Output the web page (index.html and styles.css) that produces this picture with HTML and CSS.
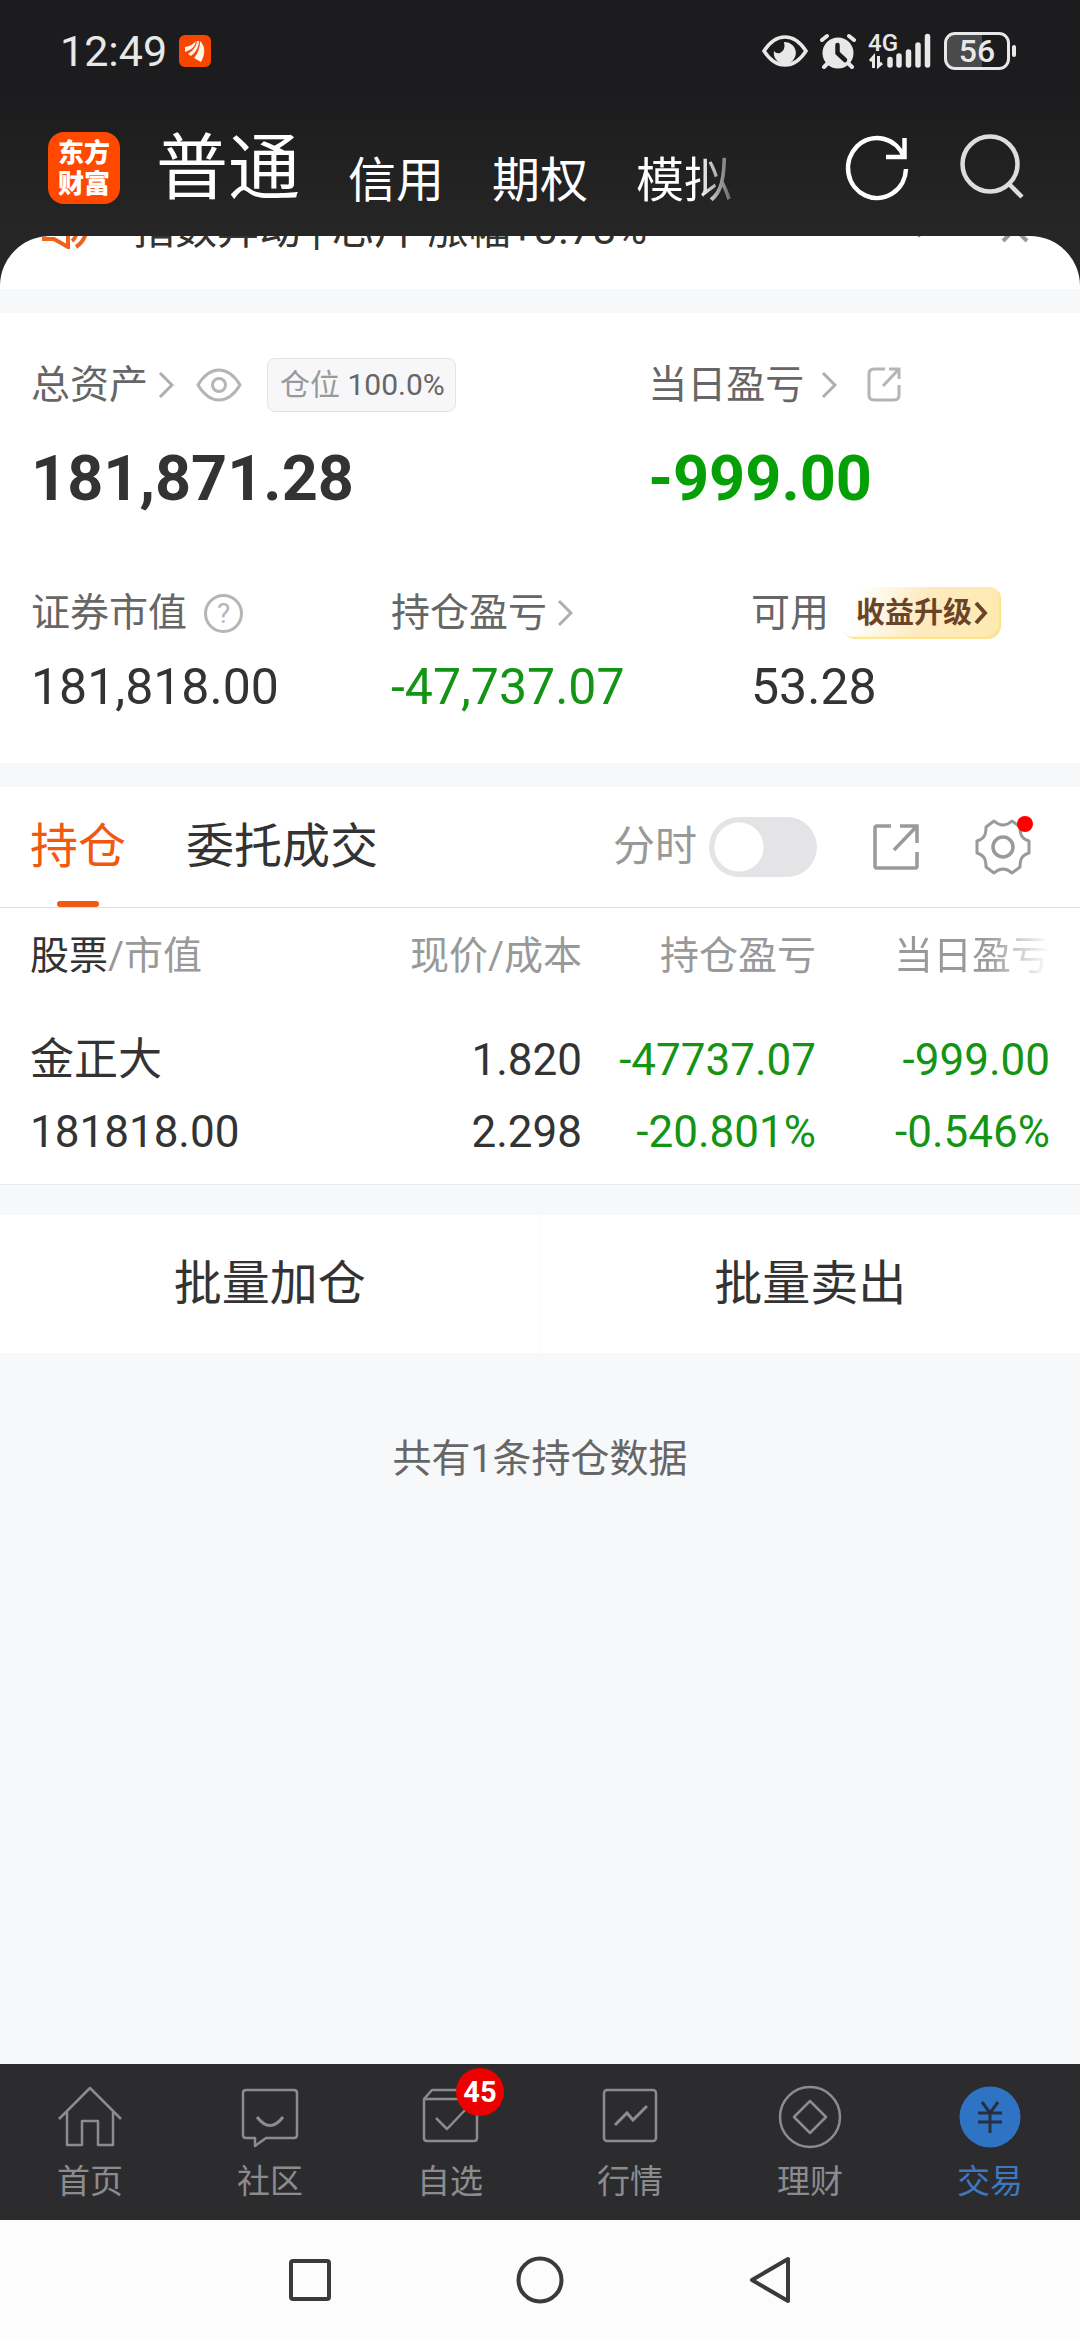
FILE: index.html
```html
<!DOCTYPE html>
<html lang="zh-CN">
<head>
<meta charset="utf-8">
<meta name="viewport" content="width=device-width, initial-scale=1">
<title>交易</title>
<link rel="stylesheet" href="styles.css">
</head>
<body>
<header class="top">
  <div class="status">
    <span class="clock">12:49</span>
    <svg class="status-app" width="32" height="32" viewBox="0 0 32 32"><rect width="32" height="32" rx="6" fill="#f64600"/><path d="M6 12Q13 11 17 6Q16 14 6 17ZM9 19Q17 14 18 6L20 6Q20 15 12 21ZM15 23Q21 16 21 6Q29 14 22 27Z" fill="#fff3ea"/></svg>
    <div class="status-right">
      <svg width="46" height="34" viewBox="0 0 46 34"><path d="M2 17Q11 3 23 3T44 17Q35 31 23 31T2 17Z" fill="none" stroke="#e8e8e8" stroke-width="3.5"/><path d="M22 8A11 11 0 1 1 12 17Q14 20 18 19Q24 16 22 8Z" fill="#e8e8e8"/></svg>
      <svg width="36" height="36" viewBox="0 0 36 36"><circle cx="18" cy="20" r="15.500" fill="#e8e8e8"/><path d="M2 7L7 3M34 7L29 3M8 30L4 34M28 30L32 34" stroke="#e8e8e8" stroke-width="4" stroke-linecap="round"/><path d="M17.500 12V20L25 27" stroke="#1c1c1e" stroke-width="4.500" fill="none" stroke-linecap="round" stroke-linejoin="round"/></svg>
      <div class="signal">
        <span class="net">4G</span>
        <svg width="64" height="36" viewBox="0 0 64 36"><path d="M2 28L5.500 24V35M14 30L10.500 33V23" fill="none" stroke="#e8e8e8" stroke-width="3"/><path d="M22 26.500V32M31 23V32M40.500 19V32M50 12V32M59.500 3.500V32" stroke="#e8e8e8" stroke-width="5.500" stroke-linecap="round"/></svg>
      </div>
      <div class="battery"><span class="cell">56</span><span class="nub"></span></div>
    </div>
  </div>
  <div class="bar">
    <a class="logo" href="#">东方<br>财富</a>
    <nav class="accounts">
      <a class="current" href="#">普通</a>
      <a href="#">信用</a>
      <a href="#">期权</a>
      <a class="fading" href="#">模拟</a>
    </nav>
    <div class="bar-actions">
      <button type="button" aria-label="刷新"><svg width="66" height="70" viewBox="0 0 66 70"><path d="M62 36A29 30 0 1 1 60 24" fill="none" stroke="#fff" stroke-width="4.500"/><path d="M60.500 5V24H42" fill="none" stroke="#fff" stroke-width="4.500"/></svg></button>
      <button type="button" aria-label="搜索"><svg width="66" height="70" viewBox="0 0 66 70"><circle cx="30" cy="31" r="27.500" fill="none" stroke="#ddd" stroke-width="4.500"/><path d="M49 51L62 64" stroke="#ddd" stroke-width="4.500"/></svg></button>
    </div>
  </div>
</header>
<main>
  <div class="notice-wrap">
    <div class="notice">
      <svg width="48" height="48" viewBox="0 0 48 48"><path d="M3 10V38H13L27 46V2L13 10Z" fill="none" stroke="#f0611d" stroke-width="4"/><path d="M31 40Q35 37 36 30M35 46Q44 40 46 28" fill="none" stroke="#f0611d" stroke-width="4"/></svg>
      <span class="notice-text">指数异动 | 芯片 涨幅+3.78%</span>
      <svg class="more" width="30" height="30" viewBox="0 0 30 30"><path d="M5 11L15 21L25 11" fill="none" stroke="#999" stroke-width="4"/></svg>
      <svg class="close" width="30" height="30" viewBox="0 0 30 30"><path d="M3 3L27 27M27 3L3 27" stroke="#999" stroke-width="4"/></svg>
    </div>
  </div>
  <section class="summary">
    <div class="row major">
      <div class="item">
        <div class="label">总资产
          <svg class="chev" width="16" height="28" viewBox="0 0 16 28"><path d="M2 2L14 14L2 26" fill="none" stroke="#aeaeae" stroke-width="3"/></svg>
          <svg class="eye" width="46" height="34" viewBox="0 0 46 34"><path d="M2 17Q11 2 23 2T44 17Q35 32 23 32T2 17Z" fill="none" stroke="#b5b5b5" stroke-width="3"/><circle cx="23" cy="17" r="6.500" fill="none" stroke="#b5b5b5" stroke-width="3"/></svg>
          <span class="chip">仓位 <b>100.0%</b></span>
        </div>
        <div class="value">181,871.28</div>
      </div>
      <div class="item">
        <div class="label">当日盈亏
          <svg class="chev wide" width="16" height="28" viewBox="0 0 16 28"><path d="M2 2L14 14L2 26" fill="none" stroke="#aeaeae" stroke-width="3"/></svg>
          <svg class="share" width="34" height="36" viewBox="0 0 34 36"><path d="M18 2H7Q2 2 2 7V28Q2 33 7 33H27Q32 33 32 28V18M22 2H32V12M32 2L16 19" fill="none" stroke="#b5b5b5" stroke-width="3"/></svg>
        </div>
        <div class="value down">-999.00</div>
      </div>
    </div>
    <div class="row minor">
      <div class="item">
        <div class="label">证券市值
          <span class="help">?</span>
        </div>
        <div class="value">181,818.00</div>
      </div>
      <div class="item">
        <div class="label">持仓盈亏
          <svg class="chev" width="16" height="28" viewBox="0 0 16 28"><path d="M2 2L14 14L2 26" fill="none" stroke="#aeaeae" stroke-width="3"/></svg>
        </div>
        <div class="value down">-47,737.07</div>
      </div>
      <div class="item">
        <div class="label">可用
          <a class="upgrade" href="#">收益升级<svg width="14" height="24" viewBox="0 0 14 24"><path d="M2 2L11 12L2 22" fill="none" stroke="#6b4428" stroke-width="4"/></svg></a>
        </div>
        <div class="value">53.28</div>
      </div>
    </div>
  </section>
  <section class="holdings">
    <div class="tabs">
      <button type="button" class="tab active">持仓</button>
      <button type="button" class="tab">委托成交</button>
      <label class="switch">分时<input type="checkbox"></label>
      <button type="button" class="tool" aria-label="分享"><svg width="48" height="48" viewBox="0 0 48 48"><path d="M19 3H5Q3 3 3 5V43Q3 45 5 45H43Q45 45 45 43V29M28 3H45V20M45 3L22 27" fill="none" stroke="#9a9a9a" stroke-width="3.500"/></svg></button>
      <button type="button" class="tool gear" aria-label="设置"><svg width="56" height="56" viewBox="0 0 56 56"><path d="M19 2Q28 10 37 2L45 8C45 16 47 20 54 22V34C47 36 45 40 45 48L37 54Q28 46 19 54L11 48C11 40 9 36 2 34V22C9 20 11 16 11 8Z" fill="none" stroke="#9a9a9a" stroke-width="3" stroke-linejoin="round"/><circle cx="28" cy="28" r="10" fill="none" stroke="#9a9a9a" stroke-width="3.500"/></svg></button>
    </div>
    <table>
      <thead>
        <tr><th><b>股票</b>/市值</th><th>现价/成本</th><th>持仓盈亏</th><th><span class="cut">当日盈亏</span></th></tr>
      </thead>
      <tbody>
        <tr><td>金正大<br>181818.00</td><td>1.820<br>2.298</td><td class="down">-47737.07<br>-20.801%</td><td class="down">-999.00<br>-0.546%</td></tr>
      </tbody>
    </table>
  </section>
  <div class="batch">
    <button type="button">批量加仓</button>
    <button type="button">批量卖出</button>
  </div>
  <p class="count">共有1条持仓数据</p>
</main>
<nav class="tabbar">
  <a href="#"><svg width="66" height="66" viewBox="0 0 66 66"><path d="M2 35L33 4L64 35M10 28V61H25V37H41V61H56V28" fill="none" stroke="#8c8c8f" stroke-width="2.500" stroke-linejoin="round"/></svg>首页</a>
  <a href="#"><svg width="66" height="66" viewBox="0 0 66 66"><path d="M9 6H57Q60 6 60 9V51Q60 54 57 54H29L18 62V54H9Q6 54 6 51V9Q6 6 9 6Z" fill="none" stroke="#8c8c8f" stroke-width="2.500" stroke-linejoin="round"/><path d="M20 33Q33 50 46 33" fill="none" stroke="#8c8c8f" stroke-width="3"/></svg>社区</a>
  <a href="#"><svg width="66" height="66" viewBox="0 0 66 66"><path d="M7 15L15 6H53L60 15V54Q60 57 57 57H10Q7 57 7 54ZM7 15H60M19 34L30 45L50 24" fill="none" stroke="#8c8c8f" stroke-width="2.500" stroke-linejoin="round"/></svg>自选<span class="badge">45</span></a>
  <a href="#"><svg width="66" height="66" viewBox="0 0 66 66"><rect x="7" y="6" width="52" height="51" rx="3" fill="none" stroke="#8c8c8f" stroke-width="2.500"/><path d="M18 41L30 29L36 36L50 22" fill="none" stroke="#8c8c8f" stroke-width="3"/></svg>行情</a>
  <a href="#"><svg width="66" height="66" viewBox="0 0 66 66"><circle cx="33" cy="33" r="30" fill="none" stroke="#8c8c8f" stroke-width="2.500"/><path d="M33 17L49 33L33 49L17 33Z" fill="none" stroke="#8c8c8f" stroke-width="2.500" stroke-linejoin="round"/></svg>理财</a>
  <a class="on" href="#"><svg width="66" height="66" viewBox="0 0 66 66"><circle cx="33" cy="33" r="30.500" fill="#2f74c4"/><path d="M25 18L33 29L41 18M21 29H45M21 38H45M33 29V49" fill="none" stroke="#28303c" stroke-width="3"/></svg>交易</a>
</nav>
<nav class="system">
  <button type="button" aria-label="最近任务"><svg width="48" height="48" viewBox="0 0 48 48"><rect x="5" y="5" width="38" height="38" rx="2" fill="none" stroke="#3a3a3a" stroke-width="4"/></svg></button>
  <button type="button" aria-label="主屏幕"><svg width="48" height="48" viewBox="0 0 48 48"><circle cx="24" cy="24" r="21.500" fill="none" stroke="#3a3a3a" stroke-width="4"/></svg></button>
  <button type="button" aria-label="返回"><svg width="48" height="48" viewBox="0 0 48 48"><path d="M42 3V45L6 24Z" fill="none" stroke="#3a3a3a" stroke-width="4" stroke-linejoin="round"/></svg></button>
</nav>
</body>
</html>
```
FILE: styles.css
```css
* { box-sizing: border-box; }
body {
  margin: 0;
  min-height: 100vh;
  display: flex;
  flex-direction: column;
  background: #f7f8fa;
  color: #333;
  font-family: Roboto, "Noto Sans CJK SC", sans-serif;
  font-size: 39px;
  line-height: 60px;
}
button {
  border: 0;
  padding: 0;
  background: none;
  color: inherit;
  font: inherit;
}
a { color: inherit; text-decoration: none; }
svg { display: block; flex: none; }

/* status bar and account switcher */
.top {
  background: linear-gradient(#1c1c1e 40%, #262626);
  color: #fff;
  height: 236px;
}
.status {
  display: flex;
  align-items: center;
  height: 102px;
  padding: 0 64px 0 60px;
  color: #e8e8e8;
}
.clock { font-size: 43px; line-height: 60px; }
.status-app { margin-left: 12px; }
.status-right {
  display: flex;
  align-items: center;
  gap: 12px;
  margin-left: auto;
}
.signal { position: relative; }
.net {
  position: absolute;
  left: 0;
  top: 0;
  font-size: 24px;
  line-height: 20px;
  font-weight: 500;
}
.battery { display: flex; align-items: center; gap: 2px; }
.cell {
  width: 66px;
  height: 38px;
  border: 3px solid #e8e8e8;
  border-radius: 11px;
  background: linear-gradient(90deg, #4a4a4c 58%, transparent 58%);
  font-size: 32px;
  line-height: 33px;
  font-weight: 500;
  text-align: center;
}
.nub { width: 4px; height: 12px; border-radius: 2px; background: #e8e8e8; }
.bar {
  display: flex;
  align-items: center;
  height: 132px;
  padding: 0 54px 0 48px;
}
.logo {
  width: 72px;
  height: 72px;
  border-radius: 16px;
  background: #ff4800;
  font-size: 26px;
  line-height: 31px;
  font-weight: 900;
  text-align: center;
  padding-top: 6px;
}
.accounts {
  display: flex;
  align-items: flex-end;
  gap: 48px;
  margin-left: 36px;
  padding-top: 2px;
  font-size: 48px;
  line-height: 56px;
}
.current { font-size: 72px; line-height: 80px; }
.fading {
  background: linear-gradient(90deg, #fff 65%, #666);
  background-clip: text;
  color: transparent;
}
.bar-actions { display: flex; gap: 50px; margin-left: auto; }

/* announcement strip, scrolled partly under the header */
.notice-wrap { background: #262626; }
.notice {
  display: flex;
  align-items: flex-end;
  height: 53px;
  padding: 0 50px 0 41px;
  border-radius: 50px 50px 0 0;
  background: #fff;
  overflow: hidden;
}
.notice > svg { margin-bottom: 40px; }
.notice-text {
  flex: 1;
  margin-left: 44px;
  font-size: 42px;
  margin-bottom: 29px;
  white-space: nowrap;
}
.notice .more { margin-bottom: 45px; }
.notice .close { margin-left: 66px; margin-bottom: 45px; }

/* asset summary */
.summary {
  margin-top: 24px;
  padding: 36px 0 38px;
  background: #fff;
}
.row { display: grid; }
.major { grid-template-columns: 4fr 3fr; }
.minor { grid-template-columns: 1fr 1fr 1fr; margin-top: 40px; }
.item { padding-left: 31px; }
.label {
  display: flex;
  align-items: center;
  height: 72px;
  color: #666;
}
.value { font-size: 50px; line-height: 76px; }
.major .value { font-size: 63px; line-height: 116px; font-weight: 700; }
.down { color: #149414; }
.major .down { color: #05a005; }
.chev { margin-left: 10px; }
.chev.wide { margin-left: 17px; }
.eye { margin-left: 22px; }
.share { margin-left: 30px; }
.chip {
  margin-left: 25px;
  padding: 0 10px 0 12px;
  border: 1px solid #e3e3e6;
  border-radius: 8px;
  background: #f7f7fa;
  color: #999;
  font-size: 30px;
  line-height: 52px;
}
.chip b { color: #666; font-weight: 400; }
.help {
  width: 39px;
  height: 39px;
  margin-left: 17px;
  border: 3px solid #b5b5b5;
  border-radius: 50%;
  color: #b5b5b5;
  font-size: 28px;
  line-height: 34px;
  text-align: center;
}
.upgrade {
  display: flex;
  align-items: center;
  gap: 2px;
  height: 52px;
  margin-left: 14px;
  padding: 0 13px;
  border-radius: 14px 12px 14px 12px;
  background: linear-gradient(105deg, #fff 10%, #fdebc0 50%, #fdeab0);
  box-shadow: inset -2px -2px 2px #fbe38c;
  color: #6b4428;
  font-size: 29px;
  font-weight: 700;
}

/* holdings */
.holdings { margin-top: 24px; background: #fff; border-bottom: 1px solid #eaeaea; }
.tabs {
  display: flex;
  align-items: center;
  height: 121px;
  padding: 0 49px 0 30px;
  border-bottom: 1px solid #dedede;
}
.tab {
  position: relative;
  height: 120px;
  margin-right: 60px;
  font-size: 48px;
}
.active { color: #f0590f; }
.active::after {
  content: "";
  position: absolute;
  left: 27px;
  bottom: 0;
  width: 42px;
  height: 6px;
  border-radius: 3px;
  background: #f0590f;
}
.switch {
  display: flex;
  align-items: center;
  gap: 12px;
  margin-left: auto;
  color: #999;
  font-size: 42px;
}
.switch input {
  appearance: none;
  width: 108px;
  height: 60px;
  margin: 0;
  border-radius: 30px;
  background: radial-gradient(circle at 30px 30px, #fff 24px, #e4e4e6 25px);
}
.tool { margin-left: 55px; }
.gear { position: relative; }
.gear::after {
  content: "";
  position: absolute;
  right: -2px;
  top: -3px;
  width: 16px;
  height: 16px;
  border-radius: 50%;
  background: #f00;
}
table {
  width: 100%;
  table-layout: fixed;
  border-collapse: collapse;
}
th, td { padding: 0 30px 0 0; text-align: right; font-weight: 400; }
th { height: 96px; color: #999; }
th:first-child, td:first-child {
  width: 35%;
  padding-left: 30px;
  padding-right: 0;
  text-align: left;
}
th b { color: #333; font-weight: 400; }
td {
  padding-top: 20px;
  padding-bottom: 16px;
  font-size: 44px;
  line-height: 72px;
  white-space: nowrap;
}
.cut {
  background: linear-gradient(90deg, #999 60%, #fff);
  background-clip: text;
  color: transparent;
}

.batch {
  display: grid;
  grid-template-columns: 1fr 1fr;
  gap: 1px;
  margin-top: 30px;
}
.batch button { height: 138px; background: #fff; font-size: 48px; }
.count {
  margin: 76px 0;
  color: #666;
  text-align: center;
}

/* bottom navigation */
.tabbar {
  display: grid;
  grid-template-columns: repeat(6, 1fr);
  margin-top: auto;
  height: 156px;
  background: #2c2c2e;
  color: #8c8c8f;
  font-size: 33px;
  line-height: 48px;
}
.tabbar a {
  position: relative;
  display: flex;
  flex-direction: column;
  align-items: center;
  gap: 8px;
  padding-top: 20px;
}
.tabbar .on { color: #3f78bf; }
.badge {
  position: absolute;
  left: 96px;
  top: 4px;
  width: 48px;
  height: 48px;
  border-radius: 50%;
  background: #ec0000;
  color: #fff;
  font-size: 29px;
  font-weight: 700;
  text-align: center;
}
.system {
  display: flex;
  justify-content: center;
  align-items: center;
  gap: 182px;
  height: 120px;
  background: #fcfcfc;
}
```
